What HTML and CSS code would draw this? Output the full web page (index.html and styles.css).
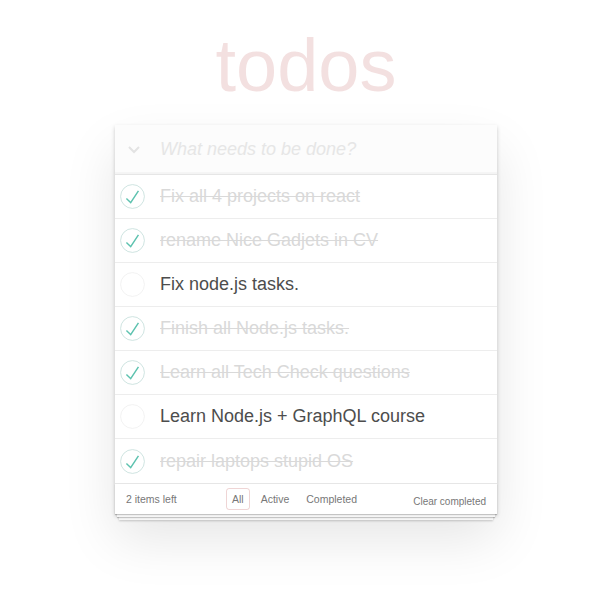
FILE: index.html
```html
<!DOCTYPE html>
<html lang="en">
<head>
<meta charset="utf-8">
<title>todos</title>
<link rel="stylesheet" href="styles.css">
</head>
<body>
<section class="todoapp">
  <h1 class="title">todos</h1>
  <div class="card">
    <header class="new-row">
      <span class="toggle-all">
        <svg width="12" height="8" viewBox="0 0 12 8"><polyline points="1,1 6,6 11,1" fill="none" stroke="#e3e3e3" stroke-width="2"/></svg>
      </span>
      <input class="new-todo" type="text" placeholder="What needs to be done?">
    </header>
    <ul class="list">
      <li class="item done">
        <span class="check"><svg width="25" height="25" viewBox="-1.5 -1.5 103 103"><circle cx="50" cy="50" r="49" fill="none" stroke="#bddad5" stroke-width="3"/><path d="M72 25L42 71 27 56l-4 4 20 20 34-52z" fill="#5dc2af"/></svg></span>
        <span class="label">Fix all 4 projects on react</span>
      </li>
      <li class="item done">
        <span class="check"><svg width="25" height="25" viewBox="-1.5 -1.5 103 103"><circle cx="50" cy="50" r="49" fill="none" stroke="#bddad5" stroke-width="3"/><path d="M72 25L42 71 27 56l-4 4 20 20 34-52z" fill="#5dc2af"/></svg></span>
        <span class="label">rename Nice Gadjets in CV</span>
      </li>
      <li class="item">
        <span class="check"><svg width="25" height="25" viewBox="-1.5 -1.5 103 103"><circle cx="50" cy="50" r="49" fill="none" stroke="#ededed" stroke-width="3"/></svg></span>
        <span class="label">Fix node.js tasks.</span>
      </li>
      <li class="item done">
        <span class="check"><svg width="25" height="25" viewBox="-1.5 -1.5 103 103"><circle cx="50" cy="50" r="49" fill="none" stroke="#bddad5" stroke-width="3"/><path d="M72 25L42 71 27 56l-4 4 20 20 34-52z" fill="#5dc2af"/></svg></span>
        <span class="label">Finish all Node.js tasks.</span>
      </li>
      <li class="item done">
        <span class="check"><svg width="25" height="25" viewBox="-1.5 -1.5 103 103"><circle cx="50" cy="50" r="49" fill="none" stroke="#bddad5" stroke-width="3"/><path d="M72 25L42 71 27 56l-4 4 20 20 34-52z" fill="#5dc2af"/></svg></span>
        <span class="label">Learn all Tech Check questions</span>
      </li>
      <li class="item">
        <span class="check"><svg width="25" height="25" viewBox="-1.5 -1.5 103 103"><circle cx="50" cy="50" r="49" fill="none" stroke="#ededed" stroke-width="3"/></svg></span>
        <span class="label">Learn Node.js + GraphQL course</span>
      </li>
      <li class="item done">
        <span class="check"><svg width="25" height="25" viewBox="-1.5 -1.5 103 103"><circle cx="50" cy="50" r="49" fill="none" stroke="#bddad5" stroke-width="3"/><path d="M72 25L42 71 27 56l-4 4 20 20 34-52z" fill="#5dc2af"/></svg></span>
        <span class="label">repair laptops stupid OS</span>
      </li>
    </ul>
    <footer class="footer">
      <span class="count">2 items left</span>
      <ul class="filters">
        <li><a class="filter selected">All</a></li>
        <li><a class="filter">Active</a></li>
        <li><a class="filter">Completed</a></li>
      </ul>
      <button class="clear">Clear completed</button>
    </footer>
  </div>
</section>
</body>
</html>
```

FILE: styles.css
```css
html, body {
  margin: 0;
  padding: 0;
}

html {
  background: #fff;
}

body {
  min-height: 600px;
  box-sizing: border-box;
  font-family: "Liberation Sans", Arial, sans-serif;
  color: #4d4d4d;
  padding: 29px 0 0 12px;
}

.todoapp {
  width: 382px;
  margin: 0 auto;
}

.title {
  margin: 0;
  height: 74px;
  font-size: 74px;
  line-height: 74px;
  font-weight: 400;
  text-align: center;
  color: rgba(175, 47, 47, 0.15);
}

.card {
  margin-top: 22px;
  background: #fff;
  box-shadow: 0 2px 4px 0 rgba(0, 0, 0, 0.2), 0 25px 50px 0 rgba(0, 0, 0, 0.1);
}

.new-row {
  height: 49px;
  display: flex;
  align-items: center;
  background: #fcfcfc;
  box-shadow: inset 0 -2px 1px rgba(0, 0, 0, 0.03);
}

.toggle-all {
  width: 45px;
  display: flex;
  justify-content: center;
  padding-left: 1px;
  box-sizing: border-box;
}

.toggle-all svg {
  display: block;
  margin-right: 16px;
  margin-left: 8px;
}

.new-todo {
  flex: 1;
  border: none;
  background: transparent;
  outline: none;
  padding: 0;
  margin: 0;
  font-family: inherit;
  font-size: 18px;
  color: #4d4d4d;
}

.new-todo::placeholder {
  font-style: italic;
  color: #e6e6e6;
}

.list {
  list-style: none;
  margin: 0;
  padding: 0;
  border-top: 1px solid #e6e6e6;
}

.item {
  height: 43px;
  border-bottom: 1px solid #ededed;
  display: flex;
  align-items: center;
  font-size: 18px;
}

.item:last-child {
  height: 44px;
  border-bottom: none;
}

.check {
  width: 25px;
  height: 25px;
  margin-left: 5px;
  margin-right: 15px;
}

.check svg {
  display: block;
}

.label {
  color: #4d4d4d;
  white-space: nowrap;
}

.done .label {
  color: #d9d9d9;
  text-decoration: line-through;
}

.footer {
  position: relative;
  height: 30px;
  border-top: 1px solid #e6e6e6;
  display: flex;
  align-items: center;
  padding: 0 11px;
  color: #777;
  font-size: 10.5px;
}

.footer::before {
  content: "";
  position: absolute;
  left: 0;
  right: 0;
  bottom: 0;
  height: 30px;
  box-shadow: 0 1px 1px rgba(0, 0, 0, 0.2),
    0 5px 0 -2px #f6f6f6,
    0 6px 1px -2px rgba(0, 0, 0, 0.2),
    0 10px 0 -4px #f6f6f6,
    0 11px 2px -4px rgba(0, 0, 0, 0.2);
}

.count {
  width: 100px;
}

.filters {
  list-style: none;
  margin: 0;
  padding: 0;
  display: flex;
  gap: 5px;
}

.filter {
  display: block;
  padding: 3px 5px;
  line-height: 14px;
  border: 1px solid transparent;
  border-radius: 3px;
  color: #777;
}

.filter.selected {
  border-color: rgba(175, 47, 47, 0.2);
}

.clear {
  margin-left: auto;
  border: none;
  background: none;
  padding: 4px 0 0;
  font-family: inherit;
  font-size: 10px;
  color: #777;
}
```
